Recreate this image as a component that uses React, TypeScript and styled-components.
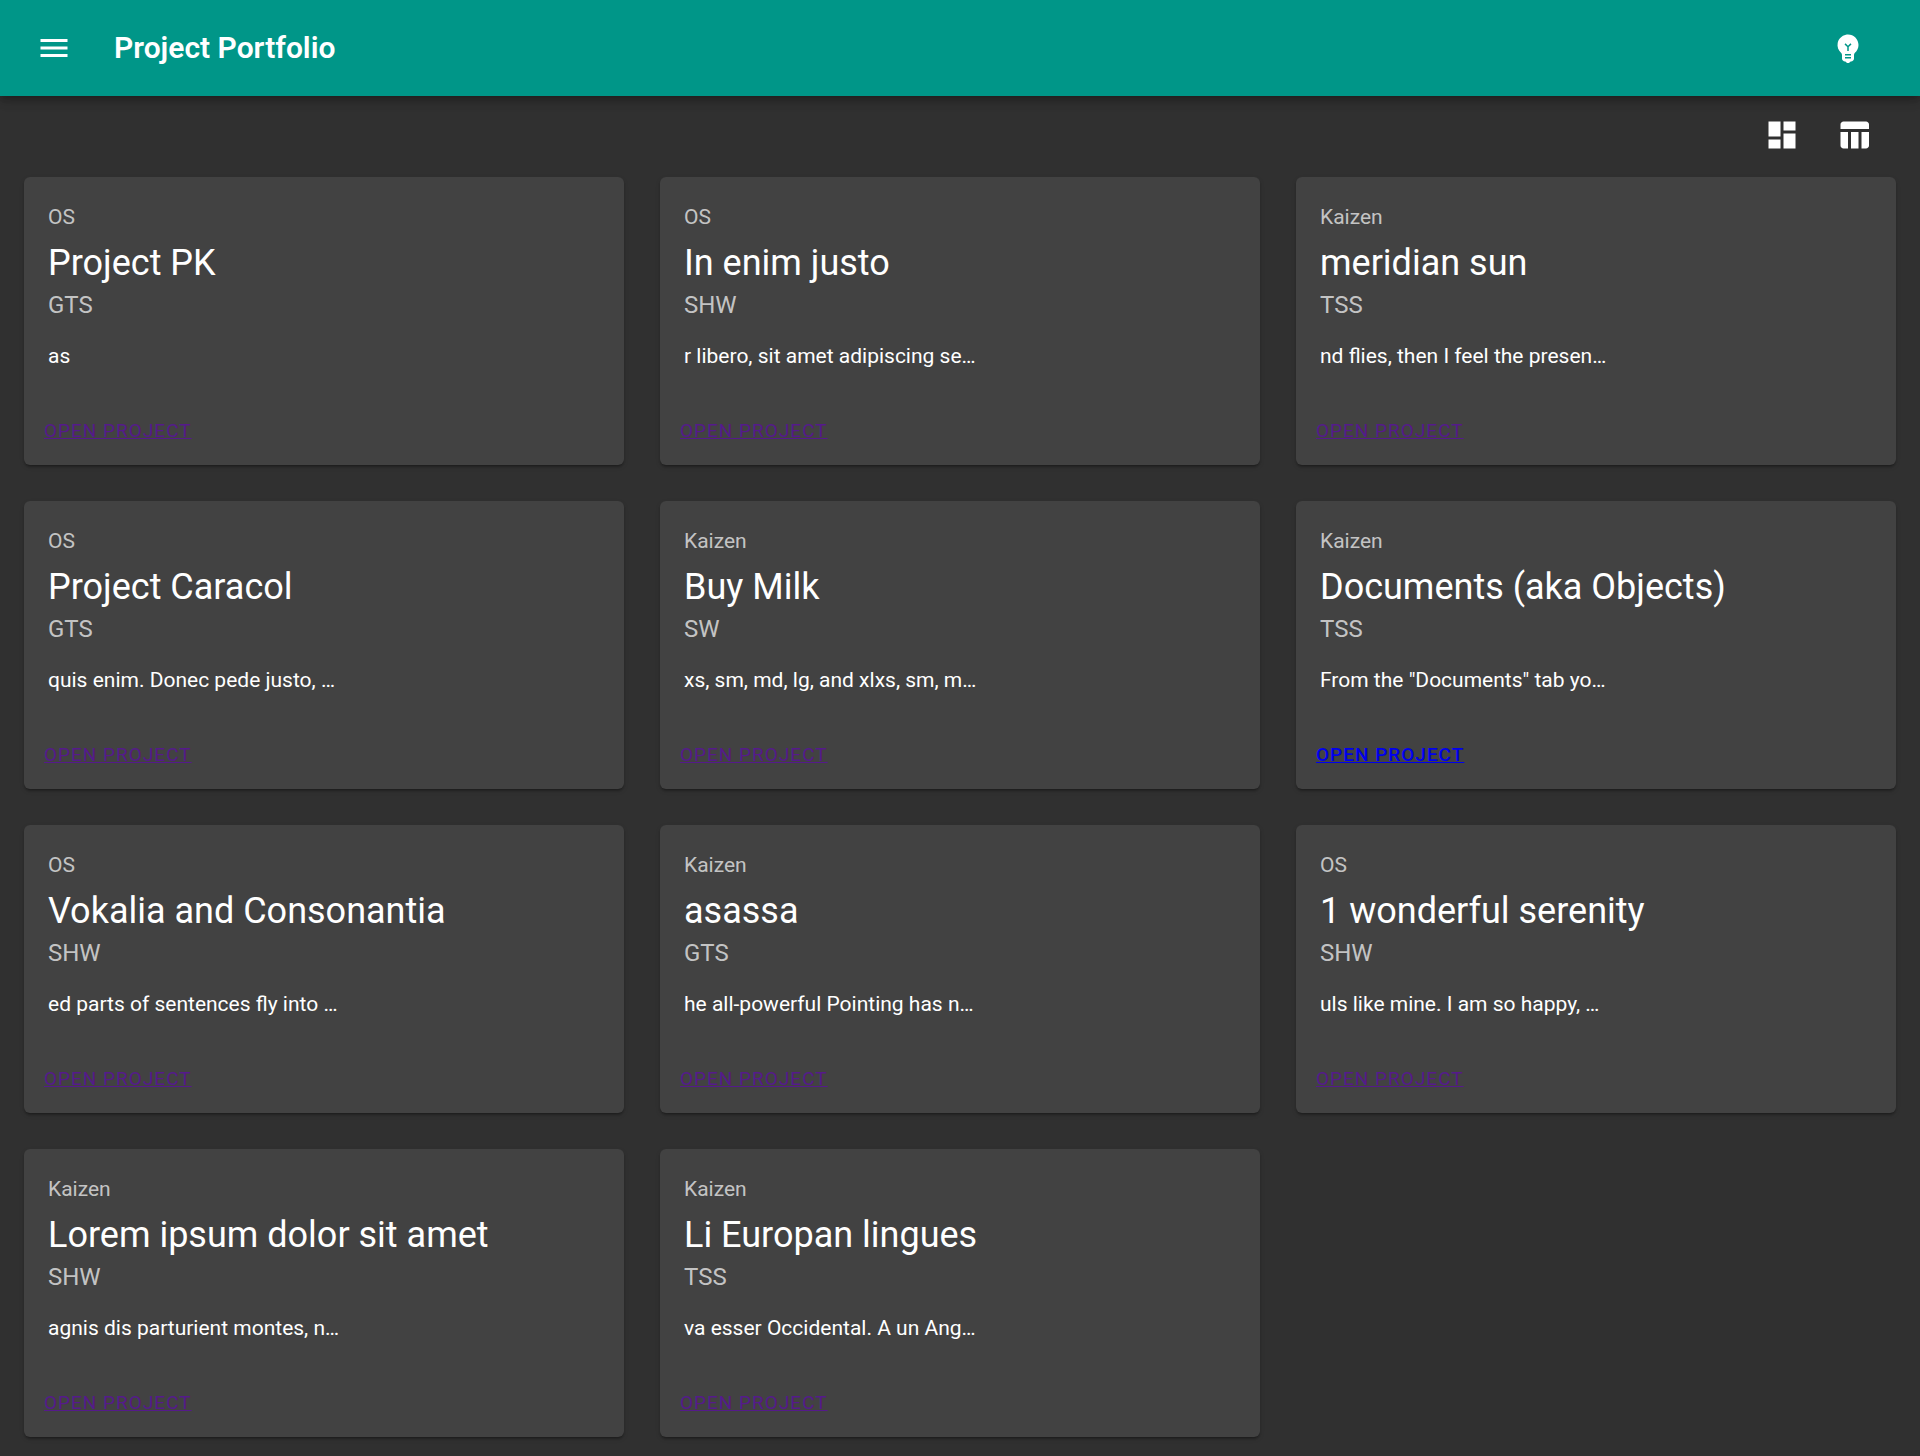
import React from "react";
import styled, { createGlobalStyle } from "styled-components";

const GlobalStyle = createGlobalStyle`
  *, *::before, *::after { box-sizing: border-box; }
  body {
    margin: 0;
    background: #303030;
    color: #fff;
    font-family: Roboto, "Liberation Sans", sans-serif;
  }
`;

const AppBar = styled.header`
  position: relative;
  display: flex;
  align-items: center;
  gap: 24px;
  min-height: 96px;
  padding: 0 36px 0 18px;
  background: #009688;
  box-shadow:
    0 3px 6px -2px rgba(0, 0, 0, 0.2),
    0 6px 8px 0 rgba(0, 0, 0, 0.14),
    0 2px 15px 0 rgba(0, 0, 0, 0.12);
`;

const AppTitle = styled.h1`
  flex: 1;
  margin: 0;
  font-size: 30px;
  font-weight: 600;
  line-height: 48px;
`;

const IconButton = styled.button`
  display: inline-flex;
  padding: 18px;
  border: 0;
  border-radius: 50%;
  background: transparent;
  color: #fff;
  cursor: pointer;

  &:hover {
    background: rgba(255, 255, 255, 0.08);
  }
`;

const Icon = styled.svg`
  width: 36px;
  height: 36px;
  fill: currentColor;
`;

const Page = styled.main`
  padding: 3px 24px 18px;
`;

const ViewSwitch = styled.div`
  display: flex;
  justify-content: flex-end;
  padding: 0 6px 6px 0;
`;

const CardGrid = styled.div`
  display: grid;
  grid-template-columns: repeat(3, minmax(0, 1fr));
  gap: 36px;

  @media (max-width: 1100px) {
    grid-template-columns: repeat(2, minmax(0, 1fr));
  }

  @media (max-width: 700px) {
    grid-template-columns: minmax(0, 1fr);
  }
`;

const Card = styled.article`
  border-radius: 6px;
  background: #424242;
  box-shadow:
    0 3px 2px -2px rgba(0, 0, 0, 0.2),
    0 2px 2px 0 rgba(0, 0, 0, 0.14),
    0 2px 5px 0 rgba(0, 0, 0, 0.12);
`;

const CardContent = styled.div`
  padding: 24px;
`;

const Category = styled.p`
  margin: 0 0 5px;
  color: rgba(255, 255, 255, 0.7);
  font-size: 21px;
  line-height: 33px;
`;

const CardTitle = styled.h2`
  margin: 0;
  font-size: 36px;
  font-weight: 400;
  line-height: 48px;
`;

const Team = styled.p`
  margin: 0 0 18px;
  color: rgba(255, 255, 255, 0.7);
  font-size: 24px;
  line-height: 36px;
`;

const Excerpt = styled.p`
  margin: 0;
  font-size: 21px;
  line-height: 30px;
`;

const CardActions = styled.div`
  display: flex;
  align-items: center;
  padding: 12px;
`;

const OpenLink = styled.a<{ $visited: boolean }>`
  padding: 6px 8px 4px;
  color: ${(p) => (p.$visited ? "#551a8b" : "#0000ee")};
  font-size: 19px;
  font-weight: ${(p) => (p.$visited ? 400 : 500)};
  line-height: 36px;
  letter-spacing: 1px;
  text-transform: uppercase;
`;

interface Project {
  category: string;
  title: string;
  team: string;
  excerpt: string;
  visited: boolean;
}

const projects: Project[] = [
  { category: "OS", title: "Project PK", team: "GTS", excerpt: "as", visited: true },
  { category: "OS", title: "In enim justo", team: "SHW", excerpt: "r libero, sit amet adipiscing se…", visited: true },
  { category: "Kaizen", title: "meridian sun", team: "TSS", excerpt: "nd flies, then I feel the presen…", visited: true },
  { category: "OS", title: "Project Caracol", team: "GTS", excerpt: "quis enim. Donec pede justo, …", visited: true },
  { category: "Kaizen", title: "Buy Milk", team: "SW", excerpt: "xs, sm, md, lg, and xlxs, sm, m…", visited: true },
  { category: "Kaizen", title: "Documents (aka Objects)", team: "TSS", excerpt: 'From the "Documents" tab yo…', visited: false },
  { category: "OS", title: "Vokalia and Consonantia", team: "SHW", excerpt: "ed parts of sentences fly into …", visited: true },
  { category: "Kaizen", title: "asassa", team: "GTS", excerpt: "he all-powerful Pointing has n…", visited: true },
  { category: "OS", title: "1 wonderful serenity", team: "SHW", excerpt: "uls like mine. I am so happy, …", visited: true },
  { category: "Kaizen", title: "Lorem ipsum dolor sit amet", team: "SHW", excerpt: "agnis dis parturient montes, n…", visited: true },
  { category: "Kaizen", title: "Li Europan lingues", team: "TSS", excerpt: "va esser Occidental. A un Ang…", visited: true },
];

const icons = {
  menu: "M3 18h18v-2H3v2zm0-5h18v-2H3v2zm0-7v2h18V6H3z",
  bulb: "M12 3c-.46 0-.93.04-1.4.14-2.76.53-4.96 2.76-5.48 5.52-.48 2.61.48 5.01 2.22 6.56.43.38.66.91.66 1.47V19c0 1.1.9 2 2 2h.28c.35.6.98 1 1.72 1s1.38-.4 1.72-1H14c1.1 0 2-.9 2-2v-2.31c0-.55.22-1.09.64-1.46C18.09 13.95 19 12.08 19 10c0-3.87-3.13-7-7-7zm2 16h-4v-1h4v1zm0-2h-4v-1h4v1zm-1.5-5.59V14h-1v-2.59L9.67 9.59l.71-.71L12 10.5l1.62-1.62.71.71-1.83 1.82z",
  dashboard: "M3 13h8V3H3v10zm0 8h8v-6H3v6zm10 0h8V11h-8v10zm0-18v6h8V3h-8z",
  table: "M10 10.02h5V21h-5zM17 21h3c1.1 0 2-.9 2-2v-9h-5v11zm3-18H5c-1.1 0-2 .9-2 2v3h19V5c0-1.1-.9-2-2-2zM3 19c0 1.1.9 2 2 2h3V10H3v9z",
};

function ActionIcon({ label, name }: { label: string; name: keyof typeof icons }) {
  return (
    <IconButton type="button" aria-label={label}>
      <Icon viewBox="0 0 24 24" aria-hidden="true">
        <path d={icons[name]} />
      </Icon>
    </IconButton>
  );
}

function ProjectCard({ project }: { project: Project }) {
  return (
    <Card>
      <CardContent>
        <Category>{project.category}</Category>
        <CardTitle>{project.title}</CardTitle>
        <Team>{project.team}</Team>
        <Excerpt>{project.excerpt}</Excerpt>
      </CardContent>
      <CardActions>
        <OpenLink href="#project" $visited={project.visited}>
          Open Project
        </OpenLink>
      </CardActions>
    </Card>
  );
}

export default function App() {
  return (
    <>
      <GlobalStyle />
      <AppBar>
        <ActionIcon label="Open menu" name="menu" />
        <AppTitle>Project Portfolio</AppTitle>
        <ActionIcon label="Toggle theme" name="bulb" />
      </AppBar>
      <Page>
        <ViewSwitch>
          <ActionIcon label="Card view" name="dashboard" />
          <ActionIcon label="Table view" name="table" />
        </ViewSwitch>
        <CardGrid>
          {projects.map((project) => (
            <ProjectCard key={project.title} project={project} />
          ))}
        </CardGrid>
      </Page>
    </>
  );
}
